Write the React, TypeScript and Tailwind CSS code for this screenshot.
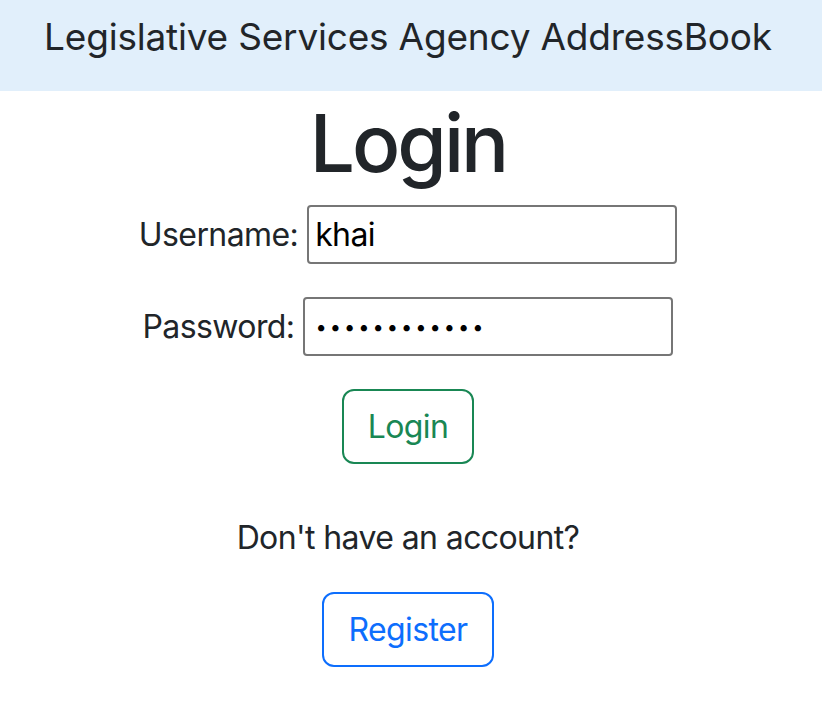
import React from 'react';

const font = { fontFamily: 'Inter, "Liberation Sans", sans-serif' };

const App: React.FC = () => {
  return (
    <div className="min-h-[720px] bg-white text-[#212529]" style={font}>
      <header className="h-[91px] bg-[#e1effb] pt-[10px] pr-[6px] text-center text-[37px] leading-[54px] tracking-[-0.2px]">
        Legislative Services Agency AddressBook
      </header>
      <main className="flex flex-col items-center pr-[6px] tracking-[-0.6px]">
        <h1 className="mt-[4px] text-[80px] font-medium leading-[96px] tracking-[-3px]">Login</h1>
        <div className="mt-[14px] flex items-center justify-center gap-[9px]">
          <label className="text-[32px] leading-[48px]">Username:</label>
          <input
            type="text"
            defaultValue="khai"
            className="h-[59px] w-[370px] rounded-[4px] border-2 border-[#767676] px-[6px] text-[32px] text-black outline-none"
          />
        </div>
        <div className="mt-[33px] flex items-center justify-center gap-[9px]">
          <label className="text-[32px] leading-[48px]">Password:</label>
          <input
            type="password"
            defaultValue="khaipassword"
            className="h-[59px] w-[370px] rounded-[4px] border-2 border-[#767676] px-[10px] text-[20px] tracking-[3px] text-black outline-none"
          />
        </div>
        <button className="mt-[33px] h-[75px] rounded-[12px] border-2 border-[#198754] px-[24px] text-[32px] text-[#198754]">
          Login
        </button>
        <p className="mt-[50px] text-[32px] leading-[48px]">Don't have an account?</p>
        <button className="mt-[30px] h-[75px] rounded-[12px] border-2 border-[#0d6efd] px-[24px] text-[32px] text-[#0d6efd]">
          Register
        </button>
      </main>
    </div>
  );
};

export default App;
